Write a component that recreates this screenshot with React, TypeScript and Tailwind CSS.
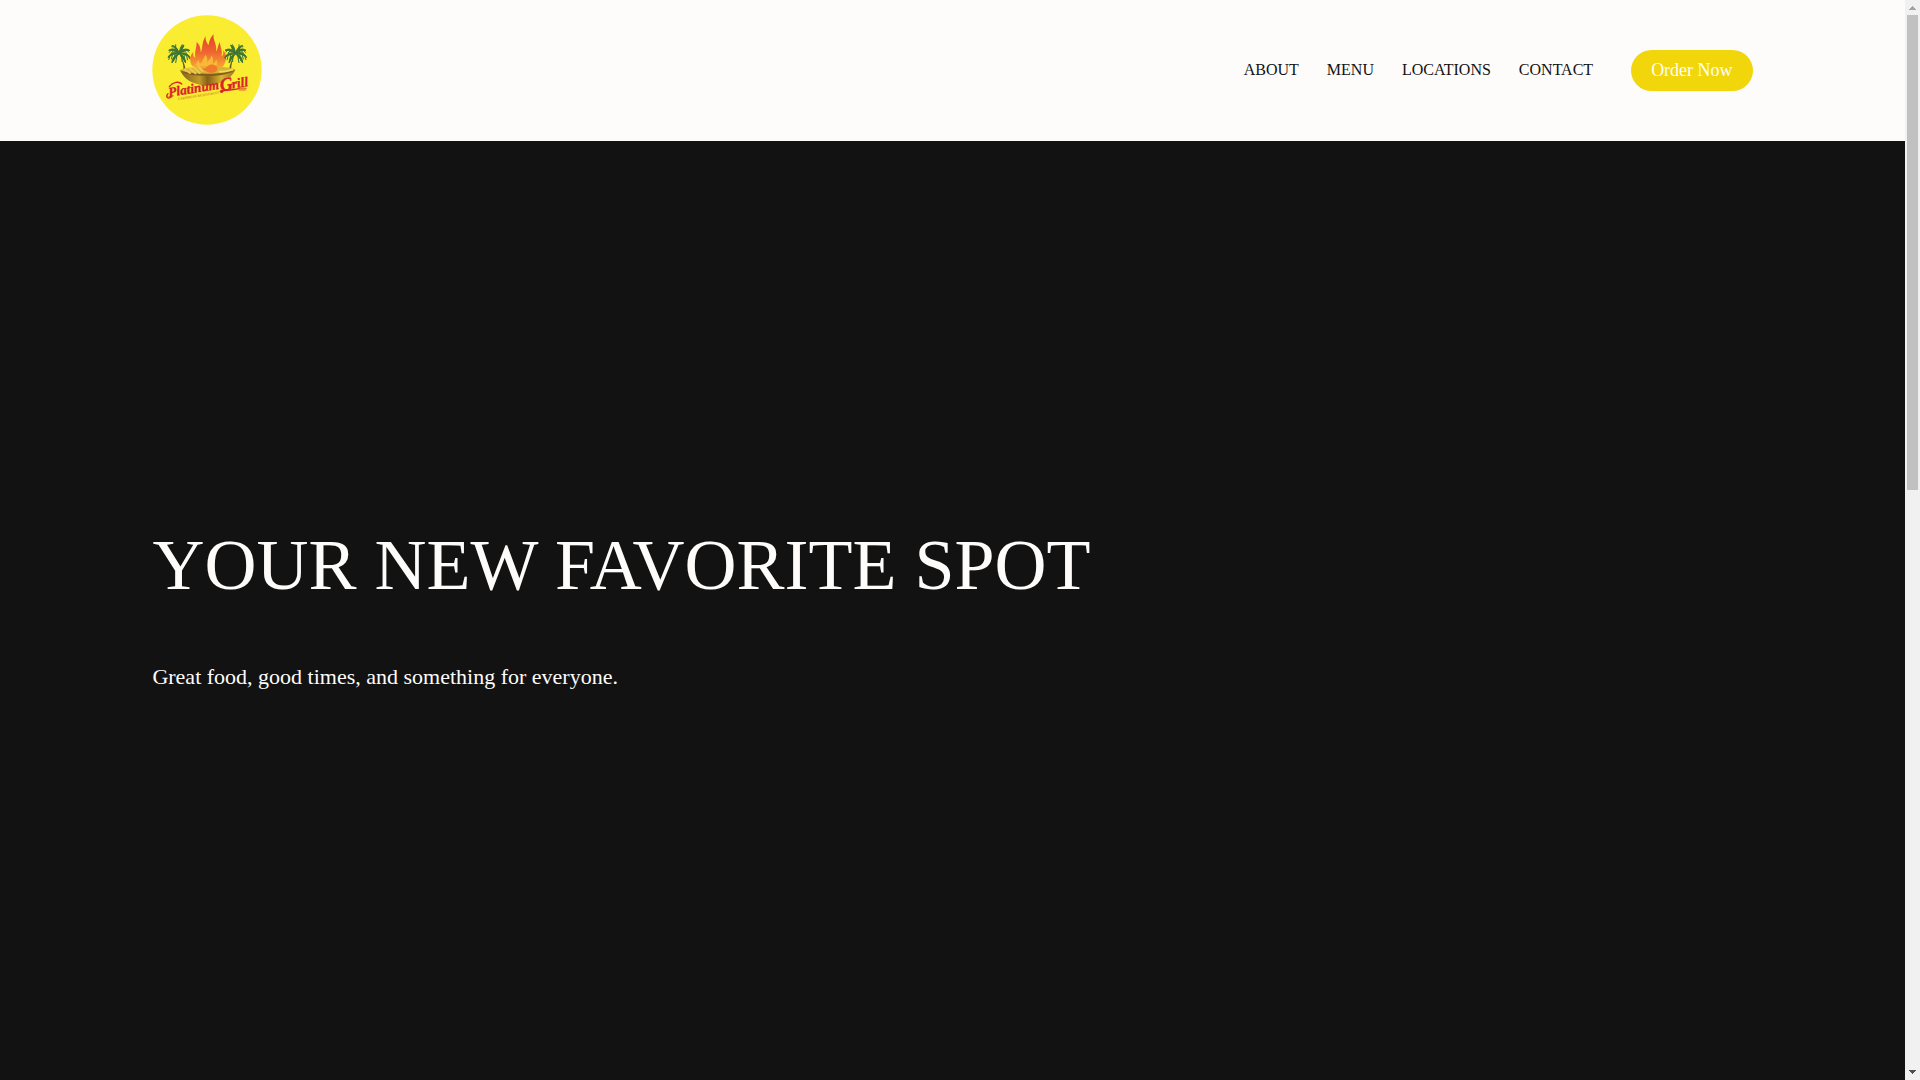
const links = ["About", "Menu", "Locations", "Contact"];

const fronds = [
  "M0 0C-8-14-20-18-32-10C-22-11-12-8 0 0Z",
  "M0 0C-14-7-28-3-34 12C-24 2-12 0 0 0Z",
  "M0 0C-12 2-22 12-22 28C-15 15-8 8 0 0Z",
  "M0 0C-4-14-10-22-22-25C-14-17-7-10 0 0Z",
  "M0 0C0-12 4-22 14-26C11-17 7-8 0 0Z",
  "M0 0C8-14 20-17 31-10C20-11 11-7 0 0Z",
  "M0 0C14-6 27 0 32 12C22 4 12 1 0 0Z",
  "M0 0C12 4 18 14 19 28C12 16 6 9 0 0Z",
];

function Palm({ x, flip }: { x: number; flip?: boolean }) {
  return (
    <g transform={`translate(${x} 137)${flip ? " scale(-1 1)" : ""}`}>
      <path d="M0 0C8 15 12 30 13 49L19 49C16 29 9 12 0 0Z" fill="#5d5a22" />
      <g fill="#3c7434" stroke="#3c7434" strokeWidth="3" strokeLinejoin="round">
        {fronds.map((d) => (
          <path key={d} d={d} />
        ))}
      </g>
      <g fill="none" stroke="#3c7434" strokeWidth="3">
        <path d="M-27 3l-5 16M-20 1l-4 16M-13 1l-4 22M-7 4l-4 24M8 5l0 20M14 3l3 22M21 3l4 17M27 6l4 10M-22-14l-9 11M-15-12l-9 10M20-14l9 10M12-11l10 9M3-16l6-12M-11-17l0-11M-18-20l-6-1" />
      </g>
    </g>
  );
}

function Logo() {
  return (
    <svg viewBox="24 21 328 330" className="size-[110px]" role="img" aria-label="Platinum Grill">
      <defs>
        <linearGradient id="flame" x1="0" y1="0" x2="0" y2="1">
          <stop offset="0" stopColor="#e2432a" />
          <stop offset="0.5" stopColor="#ee6430" />
          <stop offset="1" stopColor="#f9ac34" />
        </linearGradient>
        <linearGradient id="bowl" x1="0" y1="0" x2="1" y2="0">
          <stop offset="0" stopColor="#80601c" />
          <stop offset="0.35" stopColor="#c09a28" />
          <stop offset="0.5" stopColor="#866018" />
          <stop offset="0.75" stopColor="#d8b52e" />
          <stop offset="1" stopColor="#987420" />
        </linearGradient>
      </defs>
      <circle cx="188" cy="186" r="164" fill="#faec31" />
      <path
        d="M142 172C134 155 137 142 147 132C145 142 148 147 153 149C150 129 157 121 157 102C167 111 169 121 169 133C176 123 171 105 184 84C182 97 188 104 192 112C196 101 195 92 208 79C204 95 219 108 215 130C221 124 220 111 227 102C226 116 237 127 231 145C238 142 238 134 236 127C250 141 246 160 237 174C221 187 159 187 142 172Z"
        fill="url(#flame)"
      />
      <path
        d="M154 174C153 166 158 161 163 155C163 162 166 166 171 166C175 155 180 149 183 140C190 148 190 156 188 162C197 156 200 149 201 142C207 150 208 159 204 167C211 164 214 160 216 155C221 164 219 171 213 176Z"
        fill="#f8b838"
      />
      <Palm x={105} />
      <Palm x={273} flip />
      <path d="M107 187C122 217 145 229 184 233C228 230 260 214 273 185C239 197 150 205 107 187Z" fill="url(#bowl)" />
      <path d="M107 186C130 175 249 172 273 184C252 203 134 207 107 186Z" fill="#d9b338" />
      <path d="M107 187C142 201 238 201 273 185C253 208 129 212 107 187Z" fill="#805e20" />
      <path d="M121 184L137 195M134 180L153 196M148 178L166 195M163 177L175 189" stroke="#f0c94c" strokeWidth="6" strokeLinecap="round" />
      <path d="M174 180C183 185 186 174 198 170C211 168 221 176 219 185C214 196 194 198 185 188C179 187 174 186 174 180Z" fill="#f2782b" />
      <path d="M224 190C237 194 252 188 266 184" fill="none" stroke="#f6d957" strokeWidth="5" />
      <g transform="rotate(-9 70 266)" fontFamily="Liberation Serif, serif" fontStyle="italic" fontWeight="700">
        <g fill="#d8232a" stroke="#d8232a" strokeWidth="1">
          <text x="74" y="267" fontSize="40">Platinum</text>
          <text x="230" y="274" fontSize="54">G</text>
          <text x="266" y="272" fontSize="40">rill</text>
        </g>
        <text x="99" y="281" fontSize="10" fill="#c98a28">CARIBBEAN RESTAURANT</text>
      </g>
      <path d="M75 236C86 222 104 219 112 228M71 257C63 266 70 275 82 266" fill="none" stroke="#d8232a" strokeWidth="4" strokeLinecap="round" />
      <path d="M228 251C245 244 264 248 284 242" fill="none" stroke="#d8232a" strokeWidth="4" strokeLinecap="round" />
      <path d="M284 238l19-1M284 242h22M285 246l18 0" fill="none" stroke="#d8232a" strokeWidth="2" strokeLinecap="round" />
      <circle cx="232" cy="250" r="5" fill="#d8232a" />
    </svg>
  );
}

export default function App() {
  return (
    <div className="flex h-screen bg-[#121212] font-['Liberation_Serif',serif]">
      <div className="flex min-w-0 flex-1 flex-col">
        <header className="flex items-center justify-between bg-[#fdfcfa] px-[8%] pt-[15px] pb-4">
          <a href="#home">
            <Logo />
          </a>
          <div className="flex items-center gap-[38px]">
            <nav className="flex gap-7 text-base uppercase text-[#121212]">
              {links.map((name) => (
                <a key={name} href={`#${name.toLowerCase()}`}>
                  {name}
                </a>
              ))}
            </nav>
            <a href="#order" className="rounded-full bg-[#f2d60c] px-5 py-2 text-lg leading-[25px] text-[#fdfcfa]">
              Order Now
            </a>
          </div>
        </header>
        <main className="flex flex-1 flex-col justify-center gap-[52px] px-[8%] pb-2 text-[#fdfcfa]">
          <h1 className="text-7xl leading-[88px]">YOUR NEW FAVORITE SPOT</h1>
          <p className="text-[22px] leading-8">Great food, good times, and something for everyone.</p>
        </main>
      </div>
      <div aria-hidden="true" className="flex w-[15px] flex-col items-center bg-[#f1f1f1]">
        <svg viewBox="0 0 15 15" className="size-[15px]" fill="#a3a3a3" shapeRendering="crispEdges">
          <path d="M7 6h1v1h1v1h1v1h1v1H4V9h1V8h1V7h1z" />
        </svg>
        <div className="h-[44%] w-[11px] bg-[#c1c1c1]" />
        <svg viewBox="0 0 15 15" className="mt-auto size-[15px]" fill="#505050" shapeRendering="crispEdges">
          <path d="M4 5h7v1h-1v1H9v1H8v1H7V8H6V7H5V6H4z" />
        </svg>
      </div>
    </div>
  );
}
